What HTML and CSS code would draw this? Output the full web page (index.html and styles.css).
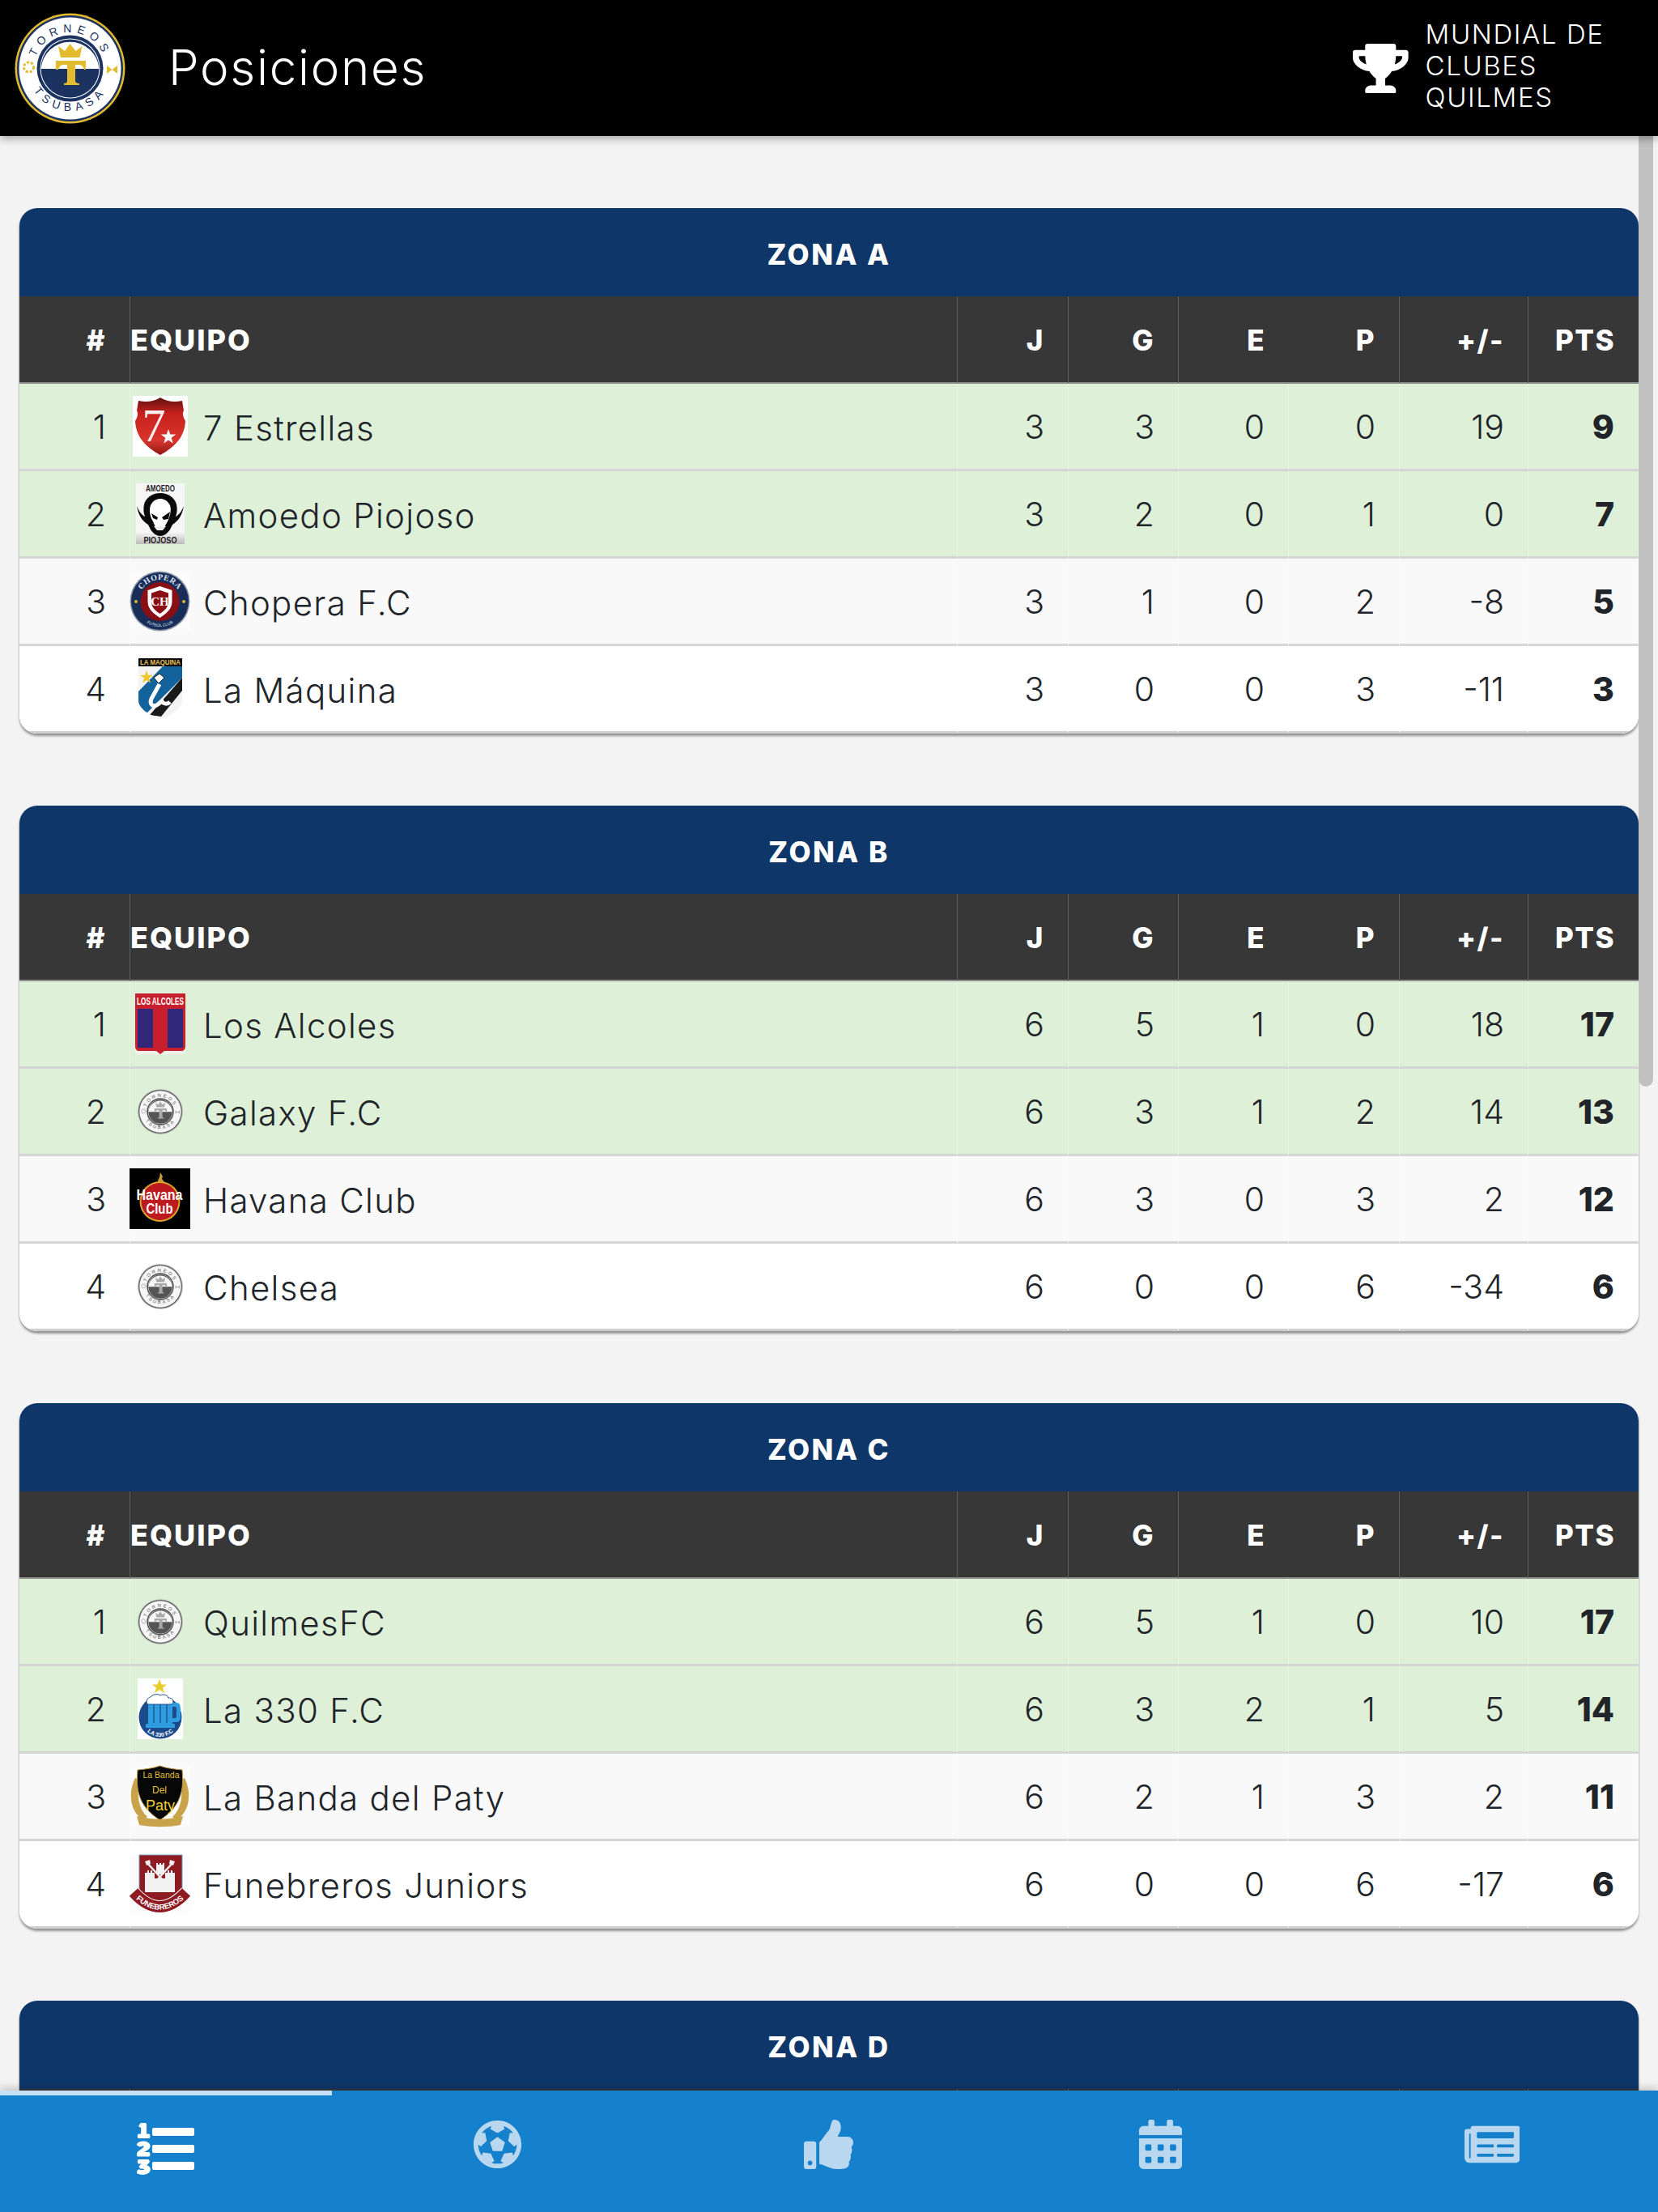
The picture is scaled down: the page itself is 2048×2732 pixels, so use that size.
FILE: index.html
```html
<!DOCTYPE html>
<html lang="es">
<head>
<meta charset="utf-8">
<title>Posiciones</title>
<link rel="stylesheet" href="styles.css">
</head>
<body>
<svg class="defs" width="0" height="0" aria-hidden="true">
  <defs>
    <path id="arc-top" d="M24 68.5a44.500 44.500 0 0 1 89 0"/>
    <path id="arc-bottom" d="M16 68.500a52.500 52.500 0 0 0 105 0"/>
    <symbol id="crest" viewBox="0 0 137 137">
      <circle cx="68.500" cy="68.500" r="68" class="c-gold"/>
      <circle cx="68.500" cy="68.500" r="65.500" class="c-ink"/>
      <circle cx="68.500" cy="68.500" r="63" class="c-white"/>
      <circle cx="68.500" cy="68.500" r="41" class="c-ink"/>
      <circle cx="68.500" cy="68.500" r="37" class="c-white"/>
      <circle cx="68.500" cy="68.500" r="36" class="c-ink"/>
      <path d="M32.600 69a36 36 0 0 1 71.800 0z" class="c-white"/>
      <path d="M57 55l-3-14 8 6 6.500-9 7 9 8-6-3 14z" class="c-gold"/>
      <path d="M51 59h37v11h-2c-1-4-3-6-6-6h-5v20c0 2 2 3 5 3v2H61v-2c3 0 4-1 4-3V64h-5c-3 0-5 2-6 6h-3z" class="c-gold"/>
      <text class="crest-text"><textPath href="#arc-top" startOffset="50%">TORNEOS</textPath></text>
      <text class="crest-text"><textPath href="#arc-bottom" startOffset="50%">TSUBASA</textPath></text>
      <circle cx="17.500" cy="67" r="6" class="c-spark"/>
      <path d="M114 65l6.500 5-6.500 5zM127 65l-6.500 5 6.500 5z" class="c-gold"/>
    </symbol>
  </defs>
</svg>

<div class="app">
  <header class="topbar">
    <svg class="brand" viewBox="0 0 137 137" role="img" aria-label="Torneos Tsubasa"><use href="#crest"/></svg>
    <h1 class="page-title">Posiciones</h1>
    <div class="tournament">
      <svg class="trophy" viewBox="0 0 576 512" aria-hidden="true"><path d="M552 64H448V24c0-13.300-10.700-24-24-24H152c-13.300 0-24 10.700-24 24v40H24C10.700 64 0 74.700 0 88v56c0 35.700 22.500 72.400 61.900 100.700 31.500 22.700 69.800 37.100 110 41.700C203.300 338.500 240 360 240 360v72h-48c-35.300 0-64 20.700-64 56v12c0 6.600 5.400 12 12 12h296c6.600 0 12-5.400 12-12v-12c0-35.300-28.700-56-64-56h-48v-72s36.700-21.500 68.100-73.600c40.300-4.600 78.600-19 110-41.700 39.300-28.300 61.900-65 61.900-100.700V88c0-13.300-10.700-24-24-24zM99.300 192.800C74.900 175.200 64 155.600 64 144v-16h64.200c1 32.600 5.800 61.200 12.800 86.200-15.100-5.200-29.200-12.400-41.700-21.400zM512 144c0 16.100-17.700 36.100-35.300 48.800-12.500 9-26.700 16.200-41.800 21.400 7-25 11.800-53.600 12.800-86.200H512v16z"/></svg>
      <p class="tournament-name">MUNDIAL DE CLUBES QUILMES</p>
    </div>
  </header>

  <main class="content">
    <div class="scroll-thumb"></div>

    <section class="zone">
      <h2 class="zone-title">ZONA A</h2>
      <table class="standings">
        <colgroup><col class="c-pos"><col class="c-team"><col class="c-j"><col class="c-g"><col class="c-e"><col class="c-p"><col class="c-dif"><col class="c-pts"></colgroup>
        <thead><tr><th class="num sep">#</th><th class="team sep">EQUIPO</th><th class="num sep">J</th><th class="num sep">G</th><th class="num">E</th><th class="num sep">P</th><th class="num sep">+/-</th><th class="num">PTS</th></tr></thead>
        <tbody>
          <tr class="qualified">
            <td class="num">1</td>
            <td class="team"><div class="team-cell"><span class="logo-box"><svg class="logo" width="68" height="75" viewBox="0 0 68 75" role="img" aria-label="7 Estrellas"><defs><linearGradient id="g7" x1="0" y1="0" x2="0" y2="1"><stop offset="0" stop-color="#5e1310"/><stop offset=".28" stop-color="#c8211d"/><stop offset=".75" stop-color="#d8352e"/><stop offset="1" stop-color="#8f1814"/></linearGradient></defs><rect width="68" height="75" fill="#fff"/><path d="M7 6c10 2 19 1 27-4 8 5 17 6 27 4l2 12c-2 4-1 8 2 13-1 20-13 32-31 42C16 63 4 51 3 31c3-5 4-9 2-13z" fill="url(#g7)"/><text x="26" y="56" class="logo-text seven">7</text><path d="M44 41l2.300 6.500h7l-5.600 4.200 2 6.800-5.700-4-5.700 4 2-6.800-5.600-4.200h7z" fill="#fff"/></svg></span><span class="team-name">7 Estrellas</span></div></td>
            <td class="num">3</td><td class="num">3</td><td class="num">0</td><td class="num">0</td><td class="num">19</td><td class="num pts">9</td>
          </tr>
          <tr class="qualified">
            <td class="num">2</td>
            <td class="team"><div class="team-cell"><span class="logo-box"><svg class="logo" width="60" height="75" viewBox="0 0 60 75" role="img" aria-label="Amoedo Piojoso"><defs><linearGradient id="gpio" x1="0" y1="0" x2="0" y2="1"><stop offset=".8" stop-color="#f6f6f6"/><stop offset="1" stop-color="#bbb"/></linearGradient></defs><rect width="60" height="75" fill="url(#gpio)"/><text x="30" y="10" textLength="36" lengthAdjust="spacingAndGlyphs" class="logo-text pio">AMOEDO</text><text x="30" y="74" textLength="41" lengthAdjust="spacingAndGlyphs" class="logo-text pio">PIOJOSO</text><path d="M1 28c3 7 6 11 10 13-2-5-2-10-1-15 2-8 10-14 20-14s18 6 20 14c1 5 1 10-1 15 4-2 7-6 10-13-2 11-6 18-14 23l-3 6c-3 5-8 8-12 8s-9-3-12-8l-3-6C7 46 3 39 1 28z" fill="#0a0a0a"/><path d="M18 27c3-6 8-8 12-8s9 2 12 8c2 6 0 14-3 20l-4 7H24l-3-7c-4-6-5-14-3-20z" fill="#fff"/><path d="M32 42l10-7-2 9-6 1zM19 37l8 5-1 3-5-2z" fill="#0a0a0a"/><path d="M22 53h15l-4 5h-7z" fill="#eee"/></svg></span><span class="team-name">Amoedo Piojoso</span></div></td>
            <td class="num">3</td><td class="num">2</td><td class="num">0</td><td class="num">1</td><td class="num">0</td><td class="num pts">7</td>
          </tr>
          <tr class="odd">
            <td class="num">3</td>
            <td class="team"><div class="team-cell"><span class="logo-box"><svg class="logo" width="75" height="75" viewBox="0 0 75 75" role="img" aria-label="Chopera F.C"><rect width="75" height="75" fill="#fbfbfb"/><circle cx="37.500" cy="37.500" r="37" fill="#8d97a8"/><circle cx="37.500" cy="37.500" r="35.500" fill="#182d58"/><path id="arc-chopera" d="M11 37.500a26.500 26.500 0 0 1 53 0" fill="none"/><path id="arc-chopera-b" d="M6 37.500a31.500 31.500 0 0 0 63 0" fill="none"/><text class="logo-text chopera"><textPath href="#arc-chopera" startOffset="50%">CHOPERA</textPath></text><text class="logo-text chopera-b"><textPath href="#arc-chopera-b" startOffset="50%">FUTBOL   CLUB</textPath></text><circle cx="37.500" cy="38" r="24" fill="#8a0f14"/><path d="M37.500 19l15 5v14c0 9-7 15-15 20-8-5-15-11-15-20V24z" fill="#fff"/><path d="M37.500 24l10.500 3.500V38c0 7-4.500 11-10.500 15-6-4-10.500-8-10.500-15V27.500z" fill="#8a0f14"/><text x="37.500" y="43" class="logo-text chopera-ch">CH</text><circle cx="8" cy="38" r="2" fill="#d9b92a"/><circle cx="67" cy="38" r="2" fill="#d9b92a"/></svg></span><span class="team-name">Chopera F.C</span></div></td>
            <td class="num">3</td><td class="num">1</td><td class="num">0</td><td class="num">2</td><td class="num">-8</td><td class="num pts">5</td>
          </tr>
          <tr class="even">
            <td class="num">4</td>
            <td class="team"><div class="team-cell"><span class="logo-box"><svg class="logo" width="54" height="75" viewBox="0 0 54 75" role="img" aria-label="La Máquina"><clipPath id="cmaq"><path d="M0 0h54v52c0 10-13 18-27 23C13 70 0 62 0 52z"/></clipPath><g clip-path="url(#cmaq)"><rect width="54" height="75" fill="#f3f3f3"/><path d="M30 10h24v14L8 70l-8-10V41z" fill="#12639b"/><path d="M54 24v16L28 72l-14-2z" fill="#1a1a1a"/><rect width="54" height="10" fill="#0c0c0c"/><path d="M10 15l2 6h6l-5 3.500 2 6-5-3.500-5 3.500 2-6-5-3.500h6z" fill="#f0c42c"/><path d="M26 32L16 50c-3 8 3 11 8 7l5-4c2 4 7 4 10 1" fill="none" stroke="#fff" stroke-width="5"/><path d="M19 24l7-5 6 5-4 4-3 3z" fill="#fff" stroke="#222"/></g><text x="27" y="8" textLength="50" lengthAdjust="spacingAndGlyphs" class="logo-text maq">LA MAQUINA</text></svg></span><span class="team-name">La Máquina</span></div></td>
            <td class="num">3</td><td class="num">0</td><td class="num">0</td><td class="num">3</td><td class="num">-11</td><td class="num pts">3</td>
          </tr>
        </tbody>
      </table>
    </section>

    <section class="zone">
      <h2 class="zone-title">ZONA B</h2>
      <table class="standings">
        <colgroup><col class="c-pos"><col class="c-team"><col class="c-j"><col class="c-g"><col class="c-e"><col class="c-p"><col class="c-dif"><col class="c-pts"></colgroup>
        <thead><tr><th class="num sep">#</th><th class="team sep">EQUIPO</th><th class="num sep">J</th><th class="num sep">G</th><th class="num">E</th><th class="num sep">P</th><th class="num sep">+/-</th><th class="num">PTS</th></tr></thead>
        <tbody>
          <tr class="qualified">
            <td class="num">1</td>
            <td class="team"><div class="team-cell"><span class="logo-box"><svg class="logo" width="62" height="75" viewBox="0 0 62 75" role="img" aria-label="Los Alcoles"><rect width="62" height="75" fill="#eef3ea"/><path d="M0 0h62v65c0 4-2 6-5 6H36l-5 4-5-4H5c-3 0-5-2-5-6z" fill="#c71f2d"/><rect x="3" y="19" width="19" height="48" fill="#30277a"/><rect x="40" y="19" width="19" height="48" fill="#30277a"/><text x="31" y="14" textLength="58" lengthAdjust="spacingAndGlyphs" class="logo-text alcoles">LOS ALCOLES</text></svg></span><span class="team-name">Los Alcoles</span></div></td>
            <td class="num">6</td><td class="num">5</td><td class="num">1</td><td class="num">0</td><td class="num">18</td><td class="num pts">17</td>
          </tr>
          <tr class="qualified">
            <td class="num">2</td>
            <td class="team"><div class="team-cell"><span class="logo-box"><svg class="logo crest-grey" width="56" height="56" viewBox="0 0 137 137" role="img" aria-label="Galaxy F.C"><use href="#crest"/></svg></span><span class="team-name">Galaxy F.C</span></div></td>
            <td class="num">6</td><td class="num">3</td><td class="num">1</td><td class="num">2</td><td class="num">14</td><td class="num pts">13</td>
          </tr>
          <tr class="odd">
            <td class="num">3</td>
            <td class="team"><div class="team-cell"><span class="logo-box"><svg class="logo" width="75" height="75" viewBox="0 0 75 75" role="img" aria-label="Havana Club"><rect width="75" height="75" fill="#000"/><path d="M38 5l3 5-1 3 3 4-2 8h-5l-1-10 2-4z" fill="#c49a3a"/><circle cx="37.500" cy="41" r="25" fill="#d9a72c"/><circle cx="37.500" cy="41" r="23" fill="#bd1a20"/><text x="37" y="39" textLength="57" lengthAdjust="spacingAndGlyphs" class="logo-text havana">Havana</text><text x="37" y="56" textLength="33" lengthAdjust="spacingAndGlyphs" class="logo-text havana">Club</text></svg></span><span class="team-name">Havana Club</span></div></td>
            <td class="num">6</td><td class="num">3</td><td class="num">0</td><td class="num">3</td><td class="num">2</td><td class="num pts">12</td>
          </tr>
          <tr class="even">
            <td class="num">4</td>
            <td class="team"><div class="team-cell"><span class="logo-box"><svg class="logo crest-grey" width="56" height="56" viewBox="0 0 137 137" role="img" aria-label="Chelsea"><use href="#crest"/></svg></span><span class="team-name">Chelsea</span></div></td>
            <td class="num">6</td><td class="num">0</td><td class="num">0</td><td class="num">6</td><td class="num">-34</td><td class="num pts">6</td>
          </tr>
        </tbody>
      </table>
    </section>

    <section class="zone">
      <h2 class="zone-title">ZONA C</h2>
      <table class="standings">
        <colgroup><col class="c-pos"><col class="c-team"><col class="c-j"><col class="c-g"><col class="c-e"><col class="c-p"><col class="c-dif"><col class="c-pts"></colgroup>
        <thead><tr><th class="num sep">#</th><th class="team sep">EQUIPO</th><th class="num sep">J</th><th class="num sep">G</th><th class="num">E</th><th class="num sep">P</th><th class="num sep">+/-</th><th class="num">PTS</th></tr></thead>
        <tbody>
          <tr class="qualified">
            <td class="num">1</td>
            <td class="team"><div class="team-cell"><span class="logo-box"><svg class="logo crest-grey" width="56" height="56" viewBox="0 0 137 137" role="img" aria-label="QuilmesFC"><use href="#crest"/></svg></span><span class="team-name">QuilmesFC</span></div></td>
            <td class="num">6</td><td class="num">5</td><td class="num">1</td><td class="num">0</td><td class="num">10</td><td class="num pts">17</td>
          </tr>
          <tr class="qualified">
            <td class="num">2</td>
            <td class="team"><div class="team-cell"><span class="logo-box"><svg class="logo" width="56" height="75" viewBox="0 0 56 75" role="img" aria-label="La 330 F.C"><rect width="56" height="75" fill="#fff"/><path d="M27 1l2.500 6.500H36l-5 4 2 6.500-6-4-6 4 2-6.500-5-4h6.500z" fill="#e6cf2c"/><circle cx="28" cy="48" r="26.500" fill="#1c4b8c"/><path d="M13 28h30v30H13z" fill="#2f9ce0"/><path d="M43 30h5c4 0 5 3 5 8v10c0 5-3 6-6 6h-4v-5h3c2 0 2-1 2-3V38c0-2 0-3-2-3h-3z" fill="#2f9ce0"/><path d="M20 32v23M28 32v23M36 32v23" stroke="#1c6ca8" stroke-width="2"/><rect x="10" y="56" width="36" height="5" rx="1" fill="#2f9ce0"/><path d="M11 29c0-5 4-5 6-7 3-3 9-3 11-1 3-2 9-1 10 3 4 0 6 2 6 5 0 2-2 3-4 3H14c-2 0-3-1-3-3z" fill="#fff" stroke="#1c4b8c"/><path id="arc-330" d="M6 52a22 20 0 0 0 44 0" fill="none"/><text class="logo-text t330"><textPath href="#arc-330" startOffset="50%">LA 330 F.C</textPath></text></svg></span><span class="team-name">La 330 F.C</span></div></td>
            <td class="num">6</td><td class="num">3</td><td class="num">2</td><td class="num">1</td><td class="num">5</td><td class="num pts">14</td>
          </tr>
          <tr class="odd">
            <td class="num">3</td>
            <td class="team"><div class="team-cell"><span class="logo-box"><svg class="logo" width="75" height="75" viewBox="0 0 75 75" role="img" aria-label="La Banda del Paty"><rect width="75" height="75" fill="#fbfbfb"/><path d="M7 15C-2 33 0 56 17 67l5-4C11 53 8 35 13 18zM68 15c9 18 7 41-10 52l-5-4c11-10 14-28 9-45z" fill="#c9a24a"/><path d="M10 5c10-1 19-2 27.500-5C46 3 55 4 65 5c2 24 0 44-27.500 62C10 49 8 29 10 5z" fill="#070707" stroke="#b8923a"/><path d="M9 62c18 5 39 5 57 0l-3 11c-16 3-34 3-51 0z" fill="#c9a24a"/><text x="39" y="15" class="logo-text paty-sm">La Banda</text><text x="37" y="34" class="logo-text paty-md">Del</text><text x="38" y="55" class="logo-text paty-lg">Paty</text></svg></span><span class="team-name">La Banda del Paty</span></div></td>
            <td class="num">6</td><td class="num">2</td><td class="num">1</td><td class="num">3</td><td class="num">2</td><td class="num pts">11</td>
          </tr>
          <tr class="even">
            <td class="num">4</td>
            <td class="team"><div class="team-cell"><span class="logo-box"><svg class="logo" width="75" height="72" viewBox="0 0 75 72" role="img" aria-label="Funebreros Juniors"><rect width="75" height="72" fill="#fbfbfb"/><path d="M12 0h53v44c0 10-14 18-27 22-13-4-26-12-26-22z" fill="#8e1a22" stroke="#7a9ac0"/><path d="M21 9l33 36M54 9L21 45" stroke="#eee" stroke-width="2.500"/><path d="M19 8l6-2 1 5-5 2zM56 8l-6-2-1 5 5 2z" fill="#eee"/><path d="M19 22h3v-3h2v3h2v-3h2v3h3v24H19zM44 22h3v-3h2v3h2v-3h2v3h3v24H44z" fill="#f1f1f1"/><path d="M31 29h13v17H31z" fill="#f1f1f1"/><path d="M33 10h2v2h2v-2h2v2h2v-2h2v14H33z" fill="#f1f1f1"/><path d="M5 46Q37 82 70 46" fill="none" stroke="#fff" stroke-width="16"/><path d="M5 46Q37 82 70 46" fill="none" stroke="#8e1a22" stroke-width="14"/><path id="arc-fun" d="M3 50Q37 85 72 50" fill="none"/><text class="logo-text fun"><textPath href="#arc-fun" startOffset="50%">FUNEBREROS</textPath></text></svg></span><span class="team-name">Funebreros Juniors</span></div></td>
            <td class="num">6</td><td class="num">0</td><td class="num">0</td><td class="num">6</td><td class="num">-17</td><td class="num pts">6</td>
          </tr>
        </tbody>
      </table>
    </section>

    <section class="zone">
      <h2 class="zone-title">ZONA D</h2>
      <table class="standings">
        <colgroup><col class="c-pos"><col class="c-team"><col class="c-j"><col class="c-g"><col class="c-e"><col class="c-p"><col class="c-dif"><col class="c-pts"></colgroup>
        <thead><tr><th class="num sep"></th><th class="team sep"></th><th class="num sep"></th><th class="num sep"></th><th class="num"></th><th class="num sep"></th><th class="num sep"></th><th class="num"></th></tr></thead>
      </table>
    </section>
  </main>

  <nav class="tabbar">
    <a class="tab active" href="#" aria-label="Posiciones"><svg class="tab-icon tab-icon-list" viewBox="0 0 512 512"><g class="list-numerals"><path d="M61.770 401l17.500-20.150a19.920 19.920 0 0 0 5.070-14.190v-3.310C84.340 356 80.500 352 73 352H16a8 8 0 0 0-8 8v16a8 8 0 0 0 8 8h22.830a157.410 157.410 0 0 0-11 12.310l-5.610 7c-4 5.070-5.250 10.130-2.800 14.880l1.050 1.930c3 5.760 6.290 7.880 12.250 7.880h4.730c10.330 0 15.940 2.440 15.940 9.090 0 4.720-4.200 8.220-14.360 8.220a41.540 41.540 0 0 1-15.470-3.120c-6.490-3.880-11.740-3.500-15.600 3.120l-5.590 9.310c-3.720 6.130-3.190 11.720 2.630 15.940 7.710 4.690 20.380 9.440 37 9.440 34.160 0 48.500-22.750 48.500-44.120-.03-14.380-9.120-29.760-28.730-34.880zM16 160h64a8 8 0 0 0 8-8v-16a8 8 0 0 0-8-8H64V40a8 8 0 0 0-8-8H32a8 8 0 0 0-7.140 4.420l-8 16A8 8 0 0 0 24 64h8v64H16a8 8 0 0 0-8 8v16a8 8 0 0 0 8 8zm-3.910 160H80a8 8 0 0 0 8-8v-16a8 8 0 0 0-8-8H41.320c3.290-10.290 48.340-18.680 48.340-56.440 0-29.060-25-39.560-44.470-39.560-21.360 0-33.800 10-40.460 18.750-4.370 5.590-3 10.840 2.800 15.370l8.580 6.880c5.610 4.560 11 2.470 16.120-2.440a13.440 13.440 0 0 1 9.460-3.840c3.330 0 9.280 1.560 9.280 8.750C51 260.560 0 268.650 0 307.520V312a8 8 0 0 0 8.090 8z"/></g><rect x="135" y="71" width="370" height="71" rx="14"/><rect x="135" y="220" width="370" height="71" rx="14"/><rect x="135" y="369" width="370" height="71" rx="14"/></svg></a>
    <a class="tab" href="#" aria-label="Partidos"><svg class="tab-icon" viewBox="0 0 512 512"><path d="M504 256c0 136.967-111.033 248-248 248S8 392.967 8 256 119.033 8 256 8s248 111.033 248 248zm-48 0l-.003-.282-26.064 22.741-62.679-58.500 16.454-84.355 34.303 3.072c-24.889-34.216-60.004-60.089-100.709-73.141l13.651 31.939L256 139l-74.953-41.525 13.651-31.939c-40.631 13.028-75.780 38.870-100.709 73.141l34.565-3.073 16.192 84.355-62.678 58.500-26.064-22.741-.003.282c0 43.015 13.497 83.952 38.472 117.991l7.704-33.897 85.138 10.447 36.301 77.826-29.902 17.786c40.202 13.122 84.290 13.148 124.572 0l-29.902-17.786 36.301-77.826 85.138-10.447 7.704 33.897C442.503 339.952 456 299.015 456 256zm-248.102 69.571l-29.894-91.312L256 177.732l77.996 56.527-29.622 91.312h-96.476z"/></svg></a>
    <a class="tab" href="#" aria-label="Votos"><svg class="tab-icon" viewBox="0 0 512 512"><path d="M104 224H24c-13.255 0-24 10.745-24 24v240c0 13.255 10.745 24 24 24h80c13.255 0 24-10.745 24-24V248c0-13.255-10.745-24-24-24zM64 472c-13.255 0-24-10.745-24-24s10.745-24 24-24 24 10.745 24 24-10.745 24-24 24zM384 81.452c0 42.416-25.970 66.208-33.277 94.548h101.723c33.397 0 59.397 27.746 59.553 58.098.084 17.938-7.546 37.249-19.439 49.197l-.110.110c9.836 23.337 8.237 56.037-9.308 79.469 8.681 25.895-.069 57.704-16.382 74.757 4.298 17.598 2.244 32.575-6.148 44.632C440.202 511.587 389.616 512 346.839 512l-2.845-.001c-48.287-.017-87.806-17.598-119.560-31.725-15.957-7.099-36.821-15.887-52.651-16.178-6.540-.120-11.783-5.457-11.783-11.998v-213.770c0-3.200 1.282-6.271 3.558-8.521 39.614-39.144 56.648-80.587 89.117-113.111 14.804-14.832 20.188-37.236 25.393-58.902C282.515 39.293 291.817 0 312 0c24 0 72 8 72 81.452z"/></svg></a>
    <a class="tab" href="#" aria-label="Calendario"><svg class="tab-icon tab-icon-cal" viewBox="0 0 448 512"><path d="M0 464c0 26.500 21.500 48 48 48h352c26.500 0 48-21.500 48-48V192H0v272zm320-196c0-6.600 5.400-12 12-12h40c6.600 0 12 5.400 12 12v40c0 6.600-5.400 12-12 12h-40c-6.600 0-12-5.400-12-12v-40zm0 128c0-6.600 5.400-12 12-12h40c6.600 0 12 5.400 12 12v40c0 6.600-5.400 12-12 12h-40c-6.600 0-12-5.400-12-12v-40zM192 268c0-6.600 5.400-12 12-12h40c6.600 0 12 5.400 12 12v40c0 6.600-5.400 12-12 12h-40c-6.600 0-12-5.400-12-12v-40zm0 128c0-6.600 5.400-12 12-12h40c6.600 0 12 5.400 12 12v40c0 6.600-5.400 12-12 12h-40c-6.600 0-12-5.400-12-12v-40zM64 268c0-6.600 5.400-12 12-12h40c6.600 0 12 5.400 12 12v40c0 6.600-5.400 12-12 12H76c-6.600 0-12-5.400-12-12v-40zm0 128c0-6.600 5.400-12 12-12h40c6.600 0 12 5.400 12 12v40c0 6.600-5.400 12-12 12H76c-6.600 0-12-5.400-12-12v-40zM400 64h-48V16c0-8.800-7.200-16-16-16h-32c-8.800 0-16 7.200-16 16v48H160V16c0-8.800-7.200-16-16-16h-32c-8.800 0-16 7.200-16 16v48H48C21.500 64 0 85.500 0 112v48h448v-48c0-26.500-21.500-48-48-48z"/></svg></a>
    <a class="tab" href="#" aria-label="Noticias"><svg class="tab-icon tab-icon-news" viewBox="0 0 576 512"><path d="M552 64H88c-13.255 0-24 10.745-24 24v8H24c-13.255 0-24 10.745-24 24v272c0 30.928 25.072 56 56 56h472c26.510 0 48-21.490 48-48V88c0-13.255-10.745-24-24-24zM56 400a8 8 0 0 1-8-8V144h16v248a8 8 0 0 1-8 8zm236-16H140c-6.627 0-12-5.373-12-12v-8c0-6.627 5.373-12 12-12h152c6.627 0 12 5.373 12 12v8c0 6.627-5.373 12-12 12zm208 0H348c-6.627 0-12-5.373-12-12v-8c0-6.627 5.373-12 12-12h152c6.627 0 12 5.373 12 12v8c0 6.627-5.373 12-12 12zm-208-96H140c-6.627 0-12-5.373-12-12v-8c0-6.627 5.373-12 12-12h152c6.627 0 12 5.373 12 12v8c0 6.627-5.373 12-12 12zm208 0H348c-6.627 0-12-5.373-12-12v-8c0-6.627 5.373-12 12-12h152c6.627 0 12 5.373 12 12v8c0 6.627-5.373 12-12 12zm0-96H140c-6.627 0-12-5.373-12-12v-40c0-6.627 5.373-12 12-12h360c6.627 0 12 5.373 12 12v40c0 6.627-5.373 12-12 12z"/></svg></a>
  </nav>
</div>
</body>
</html>
```

FILE: styles.css
```css
* { box-sizing: border-box; }
html, body { margin: 0; height: 100%; }
body {
  font-family: "Inter", "Liberation Sans", sans-serif;
  background: #f3f3f3;
  color: #212529;
  overflow: hidden;
}
.defs { position: absolute; }
.app { display: flex; flex-direction: column; height: 2732px; }

/* top bar */
.topbar {
  flex: 0 0 168px;
  display: flex;
  align-items: center;
  background: #000;
  color: #fff;
  padding-left: 18px;
  position: relative;
  z-index: 2;
  box-shadow: 0 3px 10px rgba(0, 0, 0, .35);
}
.brand { width: 137px; height: 137px; flex: none; --ink: #1c3260; --gold: #e3bb2e; --paper: #fff; }
.page-title {
  margin: 0 0 2px 53px;
  font-size: 60px;
  font-weight: 300;
  letter-spacing: 1.700px;
  flex: 1;
}
.tournament { display: flex; align-items: center; gap: 21px; width: 377px; }
.trophy { width: 68.600px; height: 61px; fill: #fff; flex: none; }
.tournament-name {
  margin: 0 0 6px;
  width: 240px;
  font-size: 33px;
  font-weight: 300;
  line-height: 39px;
  letter-spacing: 1.600px;
}

/* content */
.content {
  flex: 1;
  min-height: 0;
  overflow: hidden;
  position: relative;
  padding: 89px 24px 0;
  display: flex;
  flex-direction: column;
  gap: 89px;
}
.scroll-thumb {
  position: absolute;
  top: 0;
  left: 2024px;
  width: 18px;
  height: 1174px;
  background: #c1c1c1;
  border-radius: 0 0 9px 9px;
}
.zone {
  flex: none;
  border-radius: 22px;
  overflow: hidden;
  background: #fff;
  box-shadow: 0 3px 3px rgba(0, 0, 0, .4);
}
.zone-title {
  margin: 0;
  height: 109px;
  padding-top: 5px;
  background: #0f3669;
  color: #fff;
  font-size: 35px;
  font-weight: 800;
  letter-spacing: 2.500px;
  line-height: 104px;
  text-align: center;
}

/* table */
.standings {
  width: 2000px;
  table-layout: fixed;
  border-collapse: separate;
  border-spacing: 0;
}
.c-pos, .c-j { width: 137px; }
.c-team { width: 1022px; }
.c-g, .c-e, .c-pts { width: 136px; }
.c-p { width: 137px; }
.c-dif { width: 159px; }

.standings th {
  height: 108px;
  padding-top: 2px;
  background: #373737;
  color: #fff;
  font-size: 35px;
  font-weight: 800;
  letter-spacing: 1.500px;
  border-bottom: 2px solid #8d8d8d;
}
.standings th.num { padding-right: 29px; }
.standings th.team { font-size: 36px; letter-spacing: 2px; }
.standings th.sep { border-right: 1px solid #5e5e5e; }
.standings td {
  height: 108px;
  font-size: 41px;
  font-weight: 300;
  border-bottom: 3px solid #d5d5d5;
  border-right: 1px solid rgba(255, 255, 255, .25);
}
.standings tr:last-child td { border-bottom-color: #cfcfcf; }
.num { text-align: right; padding-right: 29px; }
.team { text-align: left; padding: 0; }
.standings td.pts { font-weight: 800; }
.qualified td { background: #dff0d8; }
.odd td { background: #f9f9f9; }
.even td { background: #fff; }

.team-cell { display: flex; align-items: center; gap: 16px; margin-left: -1px; }
.logo-box { flex: 0 0 75px; height: 75px; display: flex; align-items: center; justify-content: center; }
.logo { display: block; overflow: visible; }
.team-name {
  font-size: 42px;
  font-weight: 300;
  letter-spacing: 1.300px;
  padding-top: 3px;
}

/* crest colours */
.crest-grey { --ink: #555; --gold: #a9a9a9; --paper: #f6f6f6; }
.c-gold { fill: var(--gold); }
.c-ink { fill: var(--ink); }
.c-white { fill: var(--paper); }
.c-spark { fill: none; stroke: var(--gold); stroke-width: 3; stroke-dasharray: 3 2; }
.crest-text {
  font-family: "Liberation Sans", sans-serif;
  font-size: 14px;
  letter-spacing: 6px;
  fill: var(--ink);
  text-anchor: middle;
}

/* club logos */
.logo-text { font-family: "Liberation Sans", sans-serif; text-anchor: middle; }
.seven { font-family: "Liberation Serif", serif; font-size: 58px; fill: #fbeeee; }
.pio { font-size: 11px; font-weight: 700; fill: #222; }
.chopera { font-family: "Liberation Serif", serif; font-size: 10px; font-weight: 700; letter-spacing: .5px; fill: #dfe4ee; }
.chopera-b { font-size: 5px; fill: #dfe4ee; }
.chopera-ch { font-family: "Liberation Serif", serif; font-size: 15px; font-weight: 700; fill: #fff; }
.maq { font-size: 9px; font-weight: 700; fill: #e9c15a; }
.alcoles { font-size: 13px; font-weight: 700; fill: #fff; }
.havana { font-size: 18px; font-weight: 700; fill: #fff; }
.t330 { font-size: 7px; font-weight: 700; fill: #fff; }
.paty-sm { font-size: 10.500px; fill: #e2c13a; }
.paty-md { font-size: 12px; fill: #e2c13a; }
.paty-lg { font-size: 18px; fill: #f0d22c; }
.fun { font-size: 9.500px; font-weight: 700; fill: #fff; }

/* bottom bar */
.tabbar {
  flex: 0 0 150px;
  display: grid;
  grid-template-columns: repeat(5, 1fr);
  background: #1580cb;
  position: relative;
  z-index: 2;
  box-shadow: 0 -3px 10px rgba(0, 0, 0, .2);
}
.tab {
  display: flex;
  align-items: center;
  justify-content: center;
  padding-bottom: 17px;
}
.tab.active { box-shadow: inset 0 6px 0 #c6e1f5; }
.tab-icon { width: 61px; height: 61px; fill: #b9d8f0; }
.tab-icon-cal { width: 53.400px; }
.tab-icon-news { width: 68.600px; }
.tab-icon-list { width: 72px; height: 72px; margin-top: 11px; fill: #fff; }
.list-numerals { transform: scaleX(1.28); stroke: #fff; stroke-width: 6; }
```
